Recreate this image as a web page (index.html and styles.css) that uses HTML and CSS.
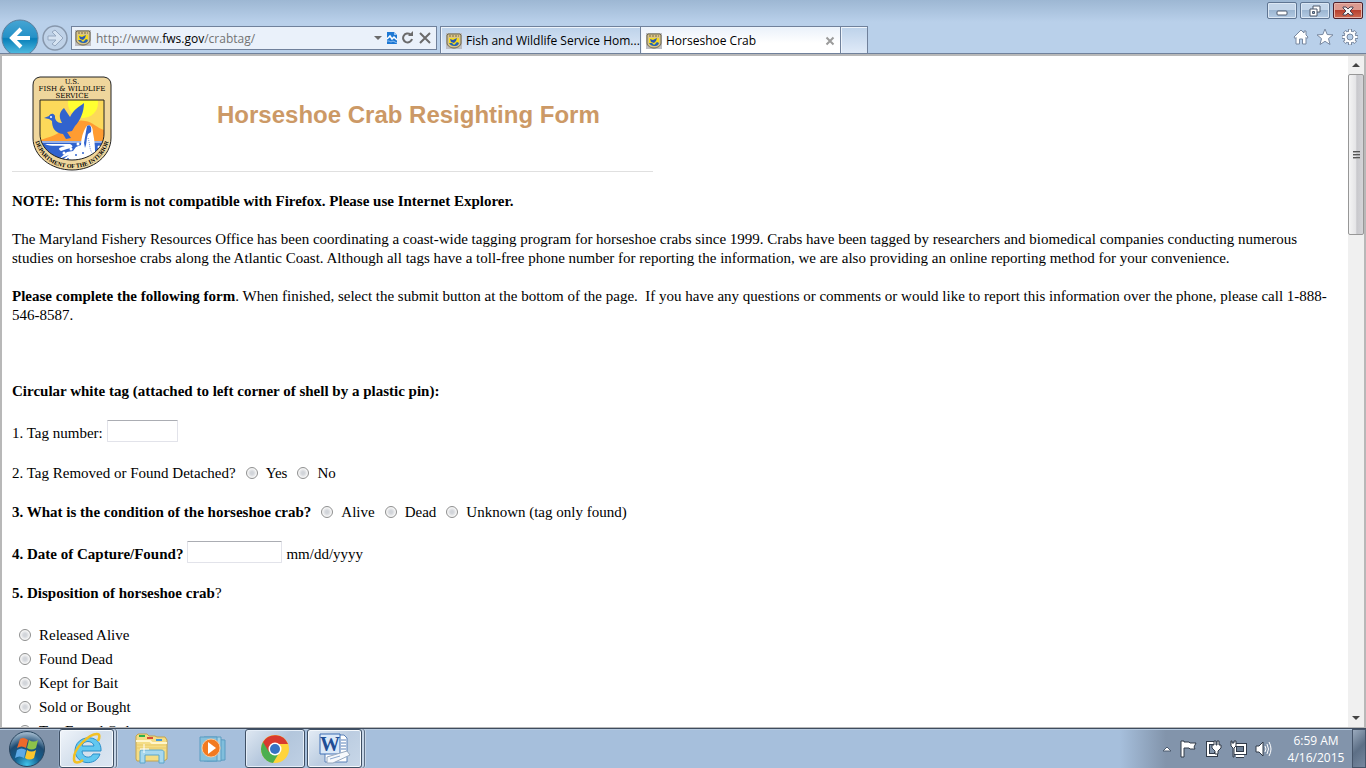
FILE: index.html
```html
<!DOCTYPE html>
<html lang="en">
<head>
  <meta charset="UTF-8">
  <meta name="viewport" content="width=device-width, initial-scale=1.0">
  <title>Horseshoe Crab</title>
  <link rel="stylesheet" href="styles.css">
</head>
<body>
  <svg class="defs" aria-hidden="true">
    <symbol id="favicon" viewBox="0 0 16 16">
      <rect width="16" height="16" fill="#bdbdc2"/>
      <path d="M1 2l1-1h12l1 1v8c0 3-4 5-7 5s-7-2-7-5z" fill="#d9c48c" stroke="#6b6650"/>
      <path d="M3 3h10" stroke="#7a6a40" stroke-dasharray="2 1"/>
      <path d="M3 5h10v5c0 2-3 3-5 3s-5-1-5-3z" fill="#f6dc1c"/>
      <path d="M4 6l3 1 4-2-1 3-2 2-3-1z" fill="#2a57b4"/>
      <path d="M3 10h3l2 2 3-3 2 1c-1 3-3 3-5 3s-4-1-5-3z" fill="#2663b8"/>
    </symbol>
  </svg>

  <header class="browser">
    <div class="titlebar">
      <button class="win-btn" aria-label="Minimize">
        <svg width="14" height="12" viewBox="0 0 14 12"><rect x="2" y="6" width="10" height="4" rx="1" fill="#fff" stroke="#4c586c"/></svg>
      </button>
      <button class="win-btn" aria-label="Restore">
        <svg width="14" height="12" viewBox="0 0 14 12"><path d="M5 1h7v6H5z" fill="#fff" stroke="#4c586c"/><path d="M2 4h7v7H2z" fill="#fff" stroke="#4c586c"/><path d="M4.500 6.500h2v2h-2z" fill="#8ca9c8" stroke="#4c586c"/></svg>
      </button>
      <button class="win-btn win-close" aria-label="Close">
        <svg width="14" height="12" viewBox="0 0 14 12"><path d="M2 2h3l2 2 2-2h3v1L9 6l3 3v1H9L7 8l-2 2H2V9l3-3-3-3z" fill="#f4f4f4" stroke="#4b4050"/></svg>
      </button>
    </div>
    <div class="toolbar">
      <button class="nav back" aria-label="Back">
        <svg width="38" height="38" viewBox="0 0 38 38">
          <defs><linearGradient id="backFill" x1="0" y1="0" x2="0" y2="1"><stop offset="0" stop-color="#46a5d3"/><stop offset=".48" stop-color="#2591c7"/><stop offset=".52" stop-color="#077fb9"/><stop offset="1" stop-color="#5cc4e6"/></linearGradient></defs>
          <circle cx="19" cy="19" r="18" fill="url(#backFill)" stroke="#5f7f9c"/>
          <path d="M29 19H12M20 10l-9 9 9 9" fill="none" stroke="#fff" stroke-width="4"/>
        </svg>
      </button>
      <button class="nav forward" aria-label="Forward">
        <svg width="26" height="26" viewBox="0 0 26 26">
          <circle cx="13" cy="13" r="12" fill="#bfd2e8" stroke="#8797ac" stroke-width="1.500"/>
          <path d="M6 11h8l-4-4 3-2 8 8-8 8-3-2 4-4H6z" fill="#d6e3f2" stroke="#95a8c0"/>
        </svg>
      </button>
      <div class="address">
        <svg class="fav" width="16" height="16"><use href="#favicon"/></svg>
        <span class="url">http://www.<b>fws.gov</b>/crabtag/</span>
        <svg width="8" height="16" viewBox="0 0 8 16"><path d="M0 6h8l-4 4z" fill="#6b6b6b"/></svg>
        <svg width="10" height="16" viewBox="0 0 10 16"><path d="M0 2h7l3 3v9H0z" fill="#1d78d4"/><path d="M7 2v3h3z" fill="#9bc4f0"/><path d="M0 9l3-3 2 3 2-2 3 3" fill="none" stroke="#fff" stroke-width="1.500"/><path d="M0 11l2 0 2 1 2-1 4 2" fill="none" stroke="#8fc0f2"/></svg>
        <svg width="12" height="16" viewBox="0 0 12 16"><path d="M8.500 4.500A4.500 4.500 0 1 0 10 9" fill="none" stroke="#6b6b6b" stroke-width="2"/><path d="M6 6h5V1z" fill="#6b6b6b"/></svg>
        <svg width="12" height="16" viewBox="0 0 12 16"><path d="M1 3l10 10M11 3L1 13" stroke="#6b6b6b" stroke-width="2"/></svg>
      </div>
      <div class="tabs">
        <button class="tab"><svg width="16" height="16"><use href="#favicon"/></svg><span>Fish and Wildlife Service Hom...</span></button>
        <button class="tab active"><svg width="16" height="16"><use href="#favicon"/></svg><span>Horseshoe Crab</span><svg class="tab-close" width="10" height="10" viewBox="0 0 10 10"><path d="M1.500 1.500l7 7M8.500 1.500l-7 7" stroke="#9b9b9b" stroke-width="2"/></svg></button>
        <button class="tab new-tab" aria-label="New tab"></button>
      </div>
      <div class="tools">
        <svg width="16" height="18" viewBox="0 0 16 18"><path d="M1 9l7-7 3 3V3h2v4l2 2-1 1.500-1-1V16H9.500v-5h-3v5H3V9.500l-1 1z" fill="#fff" stroke="#7888a0"/></svg>
        <svg width="18" height="18" viewBox="0 0 18 18"><path d="M9 1l2.200 5.500 5.800.4-4.500 3.700 1.500 5.900-5-3.200-5 3.200 1.500-5.900L1 6.900l5.800-.4z" fill="#fff" stroke="#7888a0"/></svg>
        <svg width="18" height="18" viewBox="0 0 18 18">
          <path d="M9 1v16M1 9h16M3.300 3.300l11.400 11.400M14.700 3.300L3.300 14.700" stroke="#7888a0" stroke-width="4"/>
          <circle cx="9" cy="9" r="6" fill="#fff" stroke="#7888a0"/>
          <path d="M9 1.500v15M1.500 9h15M3.800 3.800l10.400 10.400M14.200 3.800L3.800 14.200" stroke="#fff" stroke-width="2"/>
          <circle cx="9" cy="9" r="3" fill="#b9d0ea" stroke="#7888a0"/>
        </svg>
      </div>
    </div>
  </header>

  <div class="viewport">
    <main class="page">
      <div class="masthead">
        <svg class="shield" width="80" height="96" viewBox="0 0 80 96" role="img" aria-label="U.S. Fish &amp; Wildlife Service">
          <defs>
            <clipPath id="scene"><path d="M8 24h64v34c0 15-15 26-32 26S8 73 8 58z"/></clipPath>
            <path id="rim" d="M3 64C8 84 24 92 40 92s32-8 37-28"/>
          </defs>
          <path d="M8 1h64q7 1 7 8v53c0 18-18 32-39 32S1 80 1 62V9q0-7 7-8z" fill="#efd69c" stroke="#222"/>
          <g clip-path="url(#scene)">
            <rect x="8" y="24" width="64" height="62" fill="#fcd95a"/>
            <circle cx="51" cy="27" r="15" fill="#ffff31"/>
            <path d="M8 64c10-3 18-5 25-12 6-5 13-9 20-7 8 1 12 7 19 9v12H8z" fill="#ff9c31"/>
            <rect x="8" y="65" width="64" height="24" fill="#3163ce"/>
            <path d="M8 66h64" stroke="#fff" stroke-width="1"/>
            <path d="M13 68h25c4 2 3 4-3 5l-6 2c-5-3 1-4 4-5-6-1-14 1-20-2z" fill="#fff"/>
            <path d="M54 51c4-5 7 0 7 6 1 5 2 11 2 18l5 3-8 6H30l7-5-10 4 8-7 6-1 3-4 5-2c0-7 2-13 5-18z" fill="#fff"/>
            <path d="M55 50c3-2 5 1 4 6l-3 2c-2 5-1 10-3 14l-1-5c1-6 2-11 3-17z" fill="#3163ce"/>
            <path d="M56 62c2 5 1 10 4 15" fill="none" stroke="#6b8ede" stroke-dasharray="1 1"/>
            <g fill="#fff"><circle cx="32" cy="77" r="1.500"/><circle cx="39" cy="73" r="1.500"/><circle cx="46" cy="68" r="1.500"/><circle cx="67" cy="71" r="1.500"/><circle cx="68" cy="76" r="1"/></g>
            <g fill="#3163ce"><circle cx="44" cy="79" r="1"/><circle cx="51" cy="77" r="1"/><circle cx="36" cy="83" r="1"/><circle cx="61" cy="81" r="1"/></g>
          </g>
          <path d="M8 24h64v34c0 15-15 26-32 26S8 73 8 58z" fill="none" stroke="#222"/>
          <path d="M12 42l5-2c2-4 7-2 6 2 1 4 4 5 7 5-4-7-2-12 2-15l6 9c4-8 9-10 14-14 0 9-4 18-9 23l-3 5-5 1 4 6-5 1-3-5c-8-1-11-6-11-13l-3-2z" fill="#3163ce"/>
          <circle cx="19" cy="41" r="1" fill="#fff"/>
          <g class="shield-text">
            <text x="40" y="8">U.S.</text>
            <text x="40" y="15">FISH &amp; WILDLIFE</text>
            <text x="40" y="22">SERVICE</text>
          </g>
          <text class="rim-text"><textPath href="#rim" startOffset="50%">DEPARTMENT OF THE INTERIOR</textPath></text>
        </svg>
        <h1>Horseshoe Crab Resighting Form</h1>
      </div>

      <p><b>NOTE: This form is not compatible with Firefox. Please use Internet Explorer.</b></p>
      <p>The Maryland Fishery Resources Office has been coordinating a coast-wide tagging program for horseshoe crabs since 1999. Crabs have been tagged by researchers and biomedical companies conducting numerous studies on horseshoe crabs along the Atlantic Coast. Although all tags have a toll-free phone number for reporting the information, we are also providing an online reporting method for your convenience.</p>
      <p><b>Please complete the following form</b>. When finished, select the submit button at the bottom of the page.&nbsp; If you have any questions or comments or would like to report this information over the phone, please call 1-888-546-8587.</p>

      <form>
        <p><b>Circular white tag (attached to left corner of shell by a plastic pin):</b></p>
        <div class="field text-field">
          <label for="tag">1. Tag number:</label>
          <input type="text" id="tag" class="tag-input">
        </div>
        <div class="field" role="radiogroup" aria-labelledby="q2">
          <span id="q2">2. Tag Removed or Found Detached?</span>
          <label><input type="radio" name="removed">Yes</label>
          <label><input type="radio" name="removed">No</label>
        </div>
        <div class="field" role="radiogroup" aria-labelledby="q3">
          <b id="q3">3. What is the condition of the horseshoe crab?</b>
          <label><input type="radio" name="condition">Alive</label>
          <label><input type="radio" name="condition">Dead</label>
          <label><input type="radio" name="condition">Unknown (tag only found)</label>
        </div>
        <div class="field text-field">
          <label for="date"><b>4. Date of Capture/Found?</b></label>
          <input type="text" id="date" class="date-input">
          <span>mm/dd/yyyy</span>
        </div>
        <p id="q5"><b>5. Disposition of horseshoe crab</b>?</p>
        <div class="options" role="radiogroup" aria-labelledby="q5">
          <label><input type="radio" name="disposition">Released Alive</label>
          <label><input type="radio" name="disposition">Found Dead</label>
          <label><input type="radio" name="disposition">Kept for Bait</label>
          <label><input type="radio" name="disposition">Sold or Bought</label>
          <label><input type="radio" name="disposition">Tag Found Only</label>
        </div>
      </form>
    </main>
    <div class="scrollbar">
      <svg width="16" height="18" viewBox="0 0 16 18"><path d="M4 11h8L8 7z" fill="#444"/></svg>
      <div class="thumb"><span class="grip"></span></div>
      <svg class="down" width="16" height="18" viewBox="0 0 16 18"><path d="M4 7h8l-4 4z" fill="#444"/></svg>
    </div>
  </div>

  <footer class="taskbar">
    <button class="start" aria-label="Start">
      <svg width="38" height="38" viewBox="0 0 38 38">
        <defs><radialGradient id="orb" cx=".5" cy=".95" r=".9"><stop offset="0" stop-color="#3fc3ea"/><stop offset=".4" stop-color="#145f8e"/><stop offset=".7" stop-color="#1d4b72"/><stop offset="1" stop-color="#9ab3c8"/></radialGradient></defs>
        <circle cx="19" cy="19" r="17.500" fill="url(#orb)" stroke="#29455f"/>
        <path d="M12 9c3-2 5-1 8 1l-2 8c-3-2-6-2-9 0z" fill="#ec6a2c"/>
        <path d="M21 10c3 2 6 2 9 0l-2 8c-3 2-6 2-9 0z" fill="#8cc34a"/>
        <path d="M9 20c3-2 6-2 9 0l-2 8c-3-2-6-2-9 0z" fill="#5eaae6"/>
        <path d="M19 20c3 2 6 2 9 0l-2 8c-3 2-6 2-9 0z" fill="#fbc62d"/>
      </svg>
    </button>
    <button class="task stacked" aria-label="Internet Explorer">
      <svg width="34" height="34" viewBox="0 0 34 34">
        <path d="M31 19H12c0 7 9 8 11 3h7c-4 13-25 11-25-4C6 2 32 1 31 19zM12 14h12c-1-6-11-6-12 0z" fill="#62c8f0" stroke="#2b8fca"/>
        <path d="M28 9c2-4 2-7-1-7-8 0-24 15-23 25 0 5 5 4 9 1" fill="none" stroke="#f2c024" stroke-width="2.500"/>
      </svg>
    </button>
    <button class="pin pin-folder" aria-label="Windows Explorer">
      <svg width="34" height="32" viewBox="0 0 34 32">
        <path d="M2 3l2-2h9l2 2h6l2 1h8l2 3v19l-3 2H3l-1-2z" fill="#f4dd86" stroke="#c4a34c"/>
        <path d="M5 2h6v2H5z" fill="#2eb04a"/><path d="M13 4h6v2h-6z" fill="#d84a35"/><path d="M22 6h6v2h-6z" fill="#3f95dc"/>
        <path d="M2 8h14l2 2h15" fill="none" stroke="#fff6cd" stroke-width="2"/>
        <path d="M3 12h29M3 15h29" stroke="#e9ca69"/>
        <path d="M6 30V19c0-2 1-2 3-2h18c2 0 3 1 3 2v11h-5v-8H11v8z" fill="#a8d8ee" stroke="#5aa6cc"/>
        <path d="M10 11v9M6 16h9" stroke="#fff"/>
      </svg>
    </button>
    <button class="pin pin-media" aria-label="Windows Media Player">
      <svg width="30" height="28" viewBox="0 0 30 28">
        <path d="M8 4l18 1v20l-18 1z" fill="#80bedc" stroke="#5a9cc2"/>
        <path d="M5 2h17v24H5z" fill="#a6d2e6" stroke="#5a9cc2"/>
        <path d="M1 2h17v24H1z" fill="#87c1dc" stroke="#5a9cc2"/>
        <circle cx="12" cy="13" r="9" fill="#f27a20" stroke="#fac79a"/>
        <path d="M9 7l8 6-8 6z" fill="#fff"/>
      </svg>
    </button>
    <button class="task task-chrome" aria-label="Chrome">
      <svg width="30" height="30" viewBox="0 0 30 30">
        <circle cx="15" cy="15" r="14" fill="#ffd43b"/>
        <path d="M15 15L3 8a14 14 0 0 0 10 21l6-10z" fill="#4caf50"/>
        <path d="M3 8a14 14 0 0 1 25 2H15l-6 8z" fill="#d93a2f"/>
        <circle cx="15" cy="15" r="6.500" fill="#fff"/>
        <circle cx="15" cy="15" r="5" fill="#3672c4"/>
      </svg>
    </button>
    <button class="task stacked" aria-label="Word">
      <svg width="34" height="34" viewBox="0 0 34 34">
        <path d="M14 3h12l3 3v24H7V18z" fill="#fff" stroke="#5b81b8"/>
        <path d="M23 8h5M23 11h5M23 14h5M23 17h5" stroke="#5b81b8"/>
        <path d="M2 2h20v20H2z" fill="#dbe9f8" stroke="#3f6fb4"/>
        <text class="word-mark" x="12" y="19">W</text>
        <path d="M9 25l20-6 3 4-17 8H9z" fill="#f7f9fc" stroke="#98a9bf"/>
        <path d="M12 27l10-3" stroke="#8aa8cf"/>
      </svg>
    </button>
    <div class="tray">
      <svg width="10" height="16" viewBox="0 0 10 16"><path d="M1 10h8L5 6z" fill="#fff" stroke="#4c5a6e"/></svg>
      <svg width="17" height="18" viewBox="0 0 17 18"><path d="M1 1h3v1h5l1 1h6l-2 4 1 2h-5L9 8H4v9H1z" fill="#fff" stroke="#303a48"/></svg>
      <svg width="17" height="18" viewBox="0 0 17 18"><path d="M9 3H3v12h8v-3" fill="none" stroke="#303a48" stroke-width="4"/><path d="M9 3H3v12h8v-3" fill="none" stroke="#fff" stroke-width="2"/><path d="M7 5h2V1h2v4h1V1h2v4h2v3l-3 3v3h-3v-3L7 8z" fill="#fff" stroke="#303a48"/></svg>
      <svg width="17" height="18" viewBox="0 0 17 18"><path d="M5 5h10v8H5zM6 16h8" fill="#6d7f94" stroke="#303a48" stroke-width="4"/><path d="M5 5h10v8H5zM6 16h8" fill="none" stroke="#fff" stroke-width="2"/><path d="M1 1h1v2h2V1h2v5L4 8v9H3V8L1 6z" fill="#fff" stroke="#303a48"/></svg>
      <svg width="17" height="18" viewBox="0 0 17 18"><path d="M1 6h3l4-4v14l-4-4H1z" fill="#fff" stroke="#303a48"/><path d="M10 6q2 3 0 6M12 4q3 5 0 10M14 2q4 7 0 14" fill="none" stroke="#fff"/></svg>
      <div class="clock"><span>6:59 AM</span><span>4/16/2015</span></div>
    </div>
    <button class="show-desktop" aria-label="Show desktop"></button>
  </footer>
</body>
</html>
```
FILE: styles.css
```css
* {
  box-sizing: border-box;
}
body {
  display: flex;
  flex-direction: column;
  height: 100vh;
  margin: 0;
  overflow: hidden;
  font-family: "Open Sans", "Noto Sans", sans-serif;
  font-size: 12px;
}
button {
  padding: 0;
  border: 0;
  background: none;
  font: inherit;
}
svg {
  display: block;
  flex: none;
}
.defs {
  position: absolute;
  width: 0;
  height: 0;
}

/* browser frame */
.browser {
  flex: none;
  height: 54px;
  overflow: hidden;
  background: linear-gradient(#9db7d3, #b9d0ea 22px);
  border-bottom: 1px solid #70819b;
}
.titlebar {
  display: flex;
  justify-content: flex-end;
  gap: 3px;
  height: 19px;
  padding: 2px 3px 0 0;
}
.win-btn {
  display: flex;
  align-items: center;
  justify-content: center;
  width: 30px;
  height: 17px;
  border: 1px solid #5f7592;
  border-radius: 2px;
  background: linear-gradient(#c3d5e9 45%, #9cb6d2 50%, #b4cbe4);
  box-shadow: inset 0 0 0 1px #dbe7f4;
}
.win-close {
  border-color: #4f1f2a;
  background: linear-gradient(#dc9a90 45%, #b8402f 50%, #cf6a52);
  box-shadow: inset 0 0 0 1px #e8b5ab;
}
.toolbar {
  display: flex;
  align-items: flex-start;
  height: 35px;
  padding: 0 7px 0 1px;
}
.nav {
  flex: none;
}
.forward {
  margin: 6px 3px 0;
}
.address {
  display: flex;
  align-items: center;
  flex: 0 1 366px;
  gap: 5px;
  height: 24px;
  margin-top: 7px;
  padding: 0 5px 0 3px;
  border: 1px solid #70819b;
  background: #eaf1fa;
}
.url {
  flex: 1;
  color: #737373;
}
.url b {
  font-weight: normal;
  color: #000;
}
.tabs {
  display: flex;
  flex: 0 1 428px;
  height: 28px;
  margin: 7px 0 0 3px;
  border: 1px solid #70819b;
  border-bottom: 0;
}
.tab {
  display: flex;
  align-items: center;
  flex: 0 1 200px;
  gap: 4px;
  min-width: 0;
  padding: 0 5px;
  border-right: 1px solid #70819b;
  background: linear-gradient(#bdd2ea, #e1ebf8);
  box-shadow: inset 1px 1px 0 #eef4fb;
  white-space: nowrap;
}
.active {
  background: linear-gradient(#eaf1fa, #fff 60%);
}
.tab-close {
  margin-left: auto;
}
.new-tab {
  flex: 1;
  border-right: 0;
}
.tools {
  display: flex;
  gap: 7px;
  margin: 9px 0 0 auto;
}

/* page area */
.viewport {
  display: flex;
  flex: 1;
  min-height: 0;
  border: 2px solid #b8b8b8;
  border-bottom-width: 1px;
}
.page {
  flex: 1;
  padding: 20px 10px 0;
  overflow: hidden;
  background: #fff;
  color: #000;
  font-family: "Liberation Serif", "Times New Roman", serif;
  font-size: 15px;
  line-height: 19px;
}
.page p {
  margin: 0 0 19px;
}
.masthead {
  display: flex;
  align-items: center;
  gap: 105px;
  width: 641px;
  max-width: 100%;
  height: 96px;
  margin-bottom: 20px;
  padding-left: 20px;
  border-bottom: 1px solid #e0e0e0;
}
.masthead h1 {
  margin: 0 0 18px;
  color: #cc9966;
  font-family: "Liberation Sans", Arial, sans-serif;
  font-size: 24px;
  line-height: 28px;
}
.shield-text {
  font-family: "DejaVu Serif", serif;
  font-size: 7px;
  text-anchor: middle;
}
.rim-text {
  font-family: "Liberation Serif", serif;
  font-size: 6px;
  font-weight: bold;
  text-anchor: middle;
}
form {
  margin-top: 57px;
}
.field {
  display: flex;
  align-items: center;
  gap: 10px;
  min-height: 20px;
  margin-bottom: 19px;
}
.text-field {
  align-items: flex-start;
  gap: 4px;
  min-height: 24px;
}
.text-field label,
.text-field span {
  padding-top: 4px;
}
.field label,
.options label {
  display: flex;
  align-items: center;
  gap: 8px;
}
input[type="text"] {
  height: 22px;
  padding: 1px 3px;
  border: 1px solid #e2e3ea;
  border-top-color: #abadb3;
  border-radius: 1px;
  background: #fff;
}
.tag-input {
  width: 71px;
}
.date-input {
  width: 95px;
}
input[type="radio"] {
  flex: none;
  width: 12px;
  height: 12px;
  margin: 0;
  appearance: none;
  border: 1px solid #8e8f8f;
  border-radius: 50%;
  background: radial-gradient(#d2d5da 20%, #e9eaec 50%, #fff 70%);
  box-shadow: inset 0 0 0 1px #f4f4f4;
}
.options {
  padding: 1px 0 0 7px;
}
.options label {
  height: 24px;
}
.scrollbar {
  display: flex;
  flex-direction: column;
  width: 16px;
  background: #f0f0f0;
}
.thumb {
  display: flex;
  align-items: center;
  justify-content: center;
  height: 24%;
  border: 1px solid #979797;
  border-radius: 2px;
  background: linear-gradient(90deg, #f4f4f4, #e4e4e6 50%, #c8c8cc 55%, #d4d4d8);
}
.grip {
  width: 7px;
  height: 8px;
  background: repeating-linear-gradient(#555 0 1px, #aaa 1px 2px, transparent 2px 3px);
}
.down {
  margin-top: auto;
}

/* taskbar */
.taskbar {
  display: flex;
  flex: none;
  height: 40px;
  border-top: 1px solid #3e4c5f;
  background: linear-gradient(90deg, #8294ab 58px, #a6bfdc 60px, #a6bfdc calc(100% - 246px), #8294ab calc(100% - 200px));
  box-shadow: inset 0 1px 0 #b5c9df;
}
.start {
  width: 59px;
  padding-left: 8px;
}
.task {
  display: flex;
  align-items: center;
  justify-content: center;
  width: 60px;
  border: 1px solid #3f5065;
  border-radius: 3px;
  background: linear-gradient(135deg, #dfe8f2, #b3c6dc 50%, #bfd0e4);
  box-shadow: inset 0 0 0 1px #e5eef8;
}
.stacked {
  width: 55px;
  margin-right: 5px;
  background: linear-gradient(135deg, #e4ecf5, #bccde1 50%, #c8d7e8);
  box-shadow: inset 0 0 0 1px #f4f8fc, 2px 0 0 #c6d5e6, 3px 0 0 #5b6d84, 4px 0 0 #c6d5e6;
}
.stacked:nth-child(2) {
  background: linear-gradient(135deg, #f0f4fa, #d3dfec 50%, #dce6f2);
}
.pin {
  display: flex;
  align-items: center;
}
.pin-folder {
  margin-left: 15px;
}
.pin-media {
  margin-left: 31px;
}
.task-chrome {
  margin: 0 2px 0 16px;
}
.word-mark {
  fill: #1f4e96;
  font-family: "Liberation Serif", serif;
  font-size: 20px;
  font-weight: bold;
  text-anchor: middle;
}
.tray {
  display: flex;
  align-items: center;
  gap: 8px;
  margin-left: auto;
  color: #fff;
}
.clock {
  display: flex;
  flex-direction: column;
  width: 72px;
  line-height: 17px;
  text-align: center;
}
.show-desktop {
  width: 14px;
  border: 1px solid #46556a;
  background: linear-gradient(135deg, #9aaabd, #5d6f86 50%, #76889f);
}
```
